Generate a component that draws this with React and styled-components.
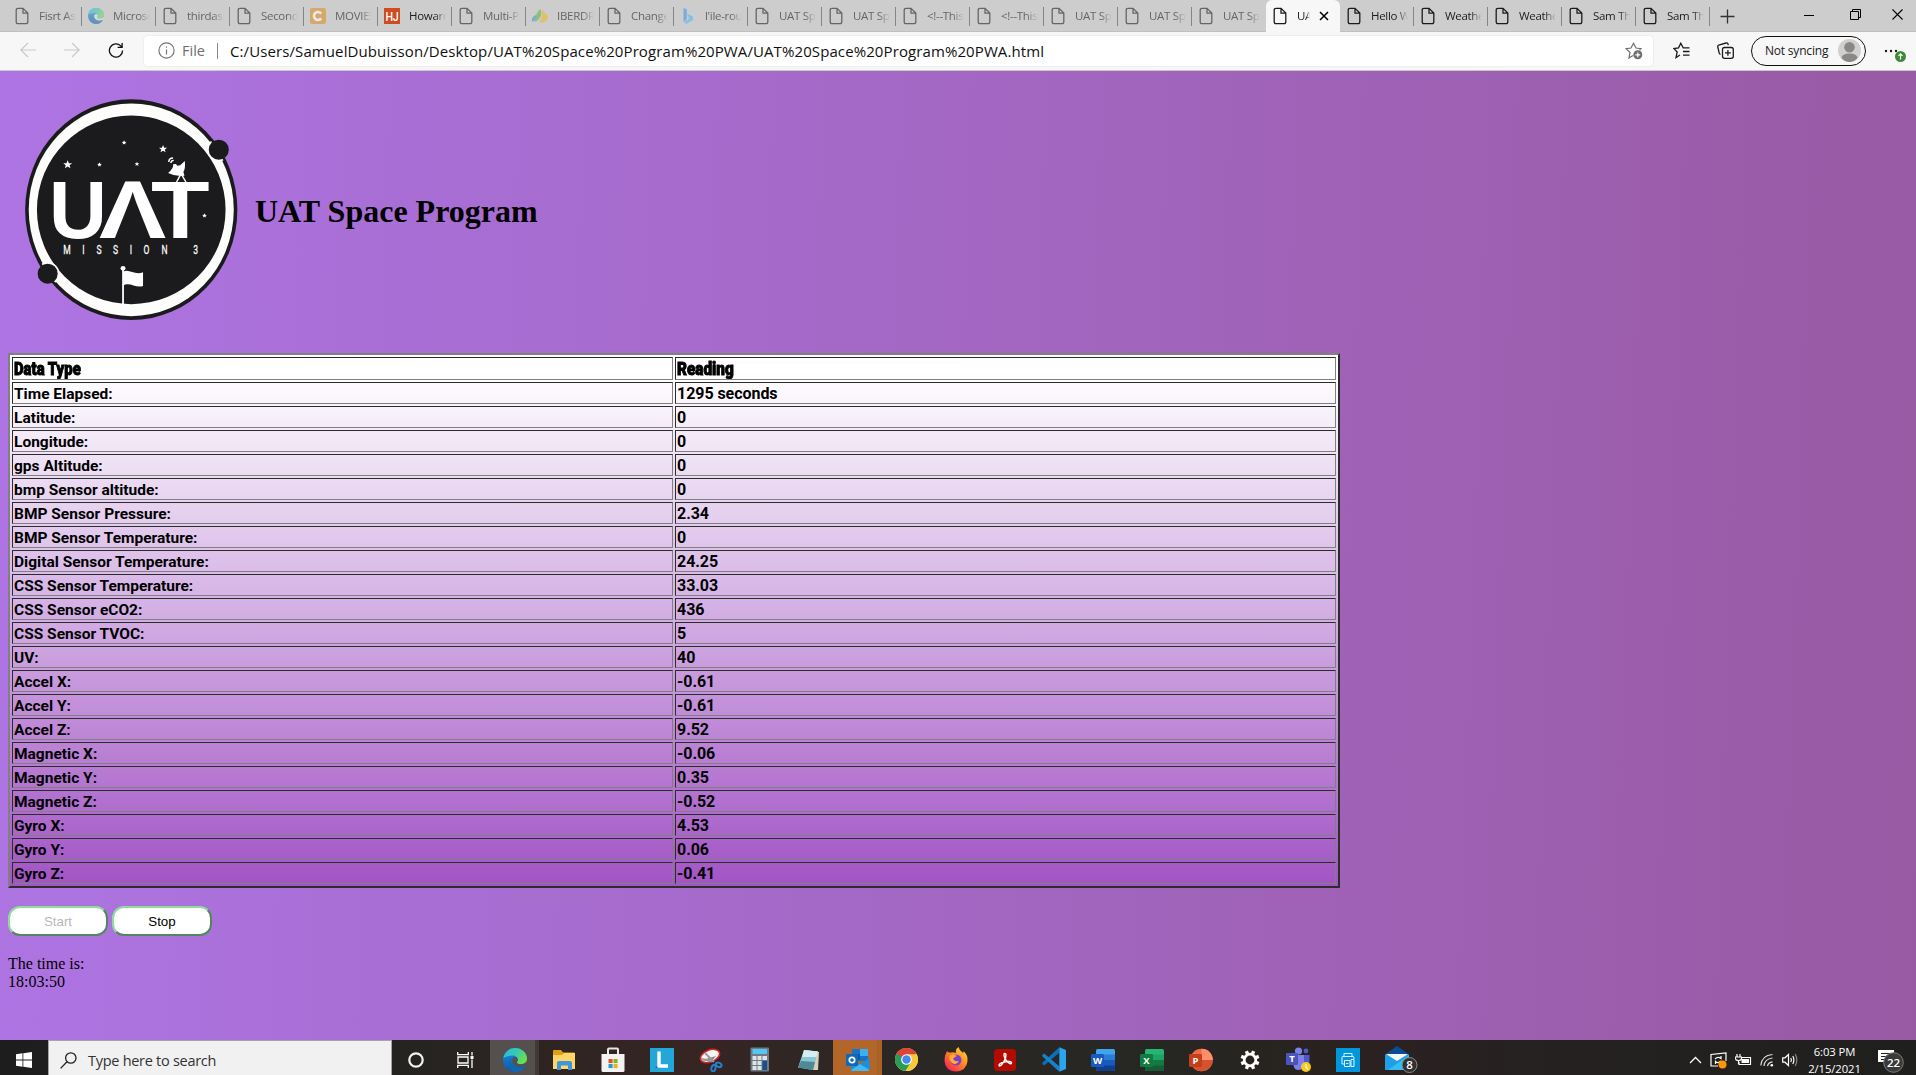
import React from "react";
import styled, { createGlobalStyle, css } from "styled-components";

const ui = `"Segoe UI", "Open Sans", "Noto Sans", sans-serif`;

const Global = createGlobalStyle`
  * { box-sizing: border-box; }
  html, body { margin: 0; padding: 0; overflow: hidden; }
  svg { display: block; flex: none; }
`;

const Screen = styled.div`
  width: 1916px;
  height: 1075px;
  display: flex;
  flex-direction: column;
  overflow: hidden;
  font-family: ${ui};
`;

/* ---------- browser chrome ---------- */
const TabStrip = styled.div`
  height: 32px;
  display: flex;
  padding-left: 8px;
  background: #cdcdcd;
  box-shadow: inset 0 -1px 0 #c0c0c0;
  flex: none;
`;

const TabItem = styled.div`
  width: 74px;
  height: 32px;
  display: flex;
  align-items: center;
  padding-left: 5px;
  font-size: 11.5px;
  letter-spacing: -0.3px;
  color: ${(p) => (p.$dim ? "#666" : "#1c1c1c")};
  background: linear-gradient(#858585, #858585) right 0 top 7px / 1px 19px no-repeat;
  ${(p) =>
    p.$active &&
    css`
      background: #f7f7f7;
      border-radius: 6px 6px 0 0;
    `}
  ${(p) => p.$plain && "background: none;"}
`;

const Favicon = styled.span`
  width: 18px;
  height: 18px;
  display: grid;
  place-items: center;
  opacity: ${(p) => (p.$dim ? 0.55 : 1)};
`;

const TabTitle = styled.span`
  width: ${(p) => (p.$short ? 13 : 37)}px;
  margin-left: 8px;
  line-height: 20px;
  overflow: hidden;
  white-space: nowrap;
  mask-image: linear-gradient(to right, #000 70%, transparent 100%);
`;

const CloseBox = styled.span`
  margin-left: 9px;
`;

const NewTab = styled.div`
  width: 34px;
  display: grid;
  place-items: center;
`;

const WindowControls = styled.div`
  margin-left: auto;
  display: flex;
  height: 29px;
`;

const WindowButton = styled.div`
  width: 46px;
  display: grid;
  place-items: center;
  &:last-child { width: 38px; }
`;

const Toolbar = styled.div`
  height: 39px;
  display: flex;
  align-items: center;
  padding: 0 8px 1px 20px;
  background: #f7f7f7;
  border-bottom: 1px solid #c9c9c9;
  flex: none;
`;

const NavIcons = styled.div`
  width: 124px;
  display: flex;
  gap: 28px;
`;

const AddressBar = styled.div`
  width: 1509px;
  height: 30px;
  flex: none;
  display: flex;
  align-items: center;
  padding: 0 10px 0 14px;
  background: #fff;
  border-radius: 4px;
  box-shadow: 0 0 2px rgba(0, 0, 0, 0.12);
`;

const Scheme = styled.span`
  width: 35px;
  margin-left: 7px;
  font-size: 14.5px;
  color: #6e6e6e;
`;

const Divider = styled.span`
  width: 1px;
  height: 16px;
  background: #8a8a8a;
  margin-right: 12px;
`;

const Url = styled.span`
  font-size: 15px;
  letter-spacing: 0.1px;
  color: #101010;
  flex: 1;
  white-space: nowrap;
`;

const ToolIcon = styled.span`
  margin-left: ${(p) => p.$gap}px;
`;

const Profile = styled.div`
  width: 115px;
  height: 30px;
  margin-left: 17px;
  padding: 0 4px 0 13px;
  display: flex;
  align-items: center;
  justify-content: space-between;
  border: 1.5px solid #111;
  border-radius: 15px;
  font-size: 12px;
  letter-spacing: -0.2px;
  color: #1a1a1a;
  white-space: nowrap;
`;

/* ---------- page ---------- */
const Page = styled.main`
  height: 969px;
  flex: none;
  padding: 0 8px;
  background: linear-gradient(92deg, #ae74e3 0%, #985aa3 100%);
  font-family: "Times New Roman", "Liberation Serif", serif;
  font-size: 16px;
  color: #000;
`;

const Banner = styled.header`
  height: 282px;
  display: flex;
  align-items: flex-start;
  gap: 13px;
  padding-top: 1px;
`;

const Title = styled.h1`
  margin: 121px 0 0;
  font-size: 32px;
  line-height: 36px;
  letter-spacing: 0;
`;

const DataTable = styled.table`
  width: 1332px;
  table-layout: fixed;
  border-collapse: separate;
  border-spacing: 2px;
  border-style: solid;
  border-width: 2px;
  border-color: #808080 #2c2c2c #2c2c2c #808080;
  background: linear-gradient(to bottom, #fff 3%, #a254c5 100%);
`;

const Cell = styled.td`
  height: 22px;
  padding: 2px 1px 0;
  overflow: hidden;
  border: 1px solid;
  border-color: #2c2c2c #808080 #808080 #2c2c2c;
  font: bold ${(p) => (p.$num ? 16 : 15.5)}px/18px "Franklin Gothic Medium", Roboto, sans-serif;
  letter-spacing: ${(p) => (p.$num ? -0.05 : 0)}px;
`;

const HeadCell = styled(Cell).attrs({ as: "th" })`
  height: 23px;
  text-align: left;
  font: 900 17.5px/19px Impact, Roboto, sans-serif;
`;

const HeadText = styled.span`
  display: inline-block;
  transform: scaleX(${(p) => p.$squeeze});
  transform-origin: left;
  -webkit-text-stroke: 0.9px #000;
`;

const Buttons = styled.div`
  display: flex;
  gap: 4px;
  margin-top: 18px;
`;

const ActionButton = styled.button`
  width: 100px;
  height: 30px;
  padding: 0;
  border: 2px solid;
  border-color: #8ddd98 #4f8a5c #4f8a5c #8ddd98;
  border-radius: 12px;
  background: #fff;
  color: #000;
  font: 13.33px Arial, "Liberation Sans", sans-serif;
  &:disabled { color: #b9b9b9; }
`;

const Clock = styled.p`
  margin: 19px 0 0;
  line-height: 18px;
`;

/* ---------- taskbar ---------- */
const Taskbar = styled.footer`
  height: 35px;
  flex: none;
  display: flex;
  background: linear-gradient(90deg, #1d1d1d 0, #262421 22%, #362523 36%, #2c2725 45%, #262723 60%, #28231f 68%, #2b2121 72%, #252221 80%, #1f1f1d 100%);
`;

const StartButton = styled.div`
  width: 48px;
  padding-top: 5px;
  display: grid;
  place-items: center;
`;

const SearchBox = styled.div`
  width: 344px;
  display: flex;
  align-items: center;
  gap: 11px;
  padding: 4px 0 0 11px;
  background: #f1f1f1;
  border: 1px solid #a5a5a5;
  border-bottom: 0;
  color: #333;
  font-size: 14.5px;
  letter-spacing: -0.28px;
`;

const TaskButton = styled.div`
  width: ${(p) => p.$w || 49}px;
  height: 35px;
  padding-top: 4px;
  display: grid;
  place-items: center;
  background: ${(p) => p.$bg || "none"};
`;

const Tray = styled.div`
  margin-left: auto;
  display: flex;
  align-items: center;
  padding: 5px 1px 0 0;
`;

const TrayIcons = styled.div`
  display: flex;
  align-items: center;
  gap: 8px;
`;

const DateTime = styled.div`
  width: 71px;
  text-align: center;
  color: #fff;
  font-size: 11.3px;
  line-height: 17px;
  letter-spacing: -0.1px;
`;

const Notice = styled.div`
  width: 45px;
  padding-left: 8px;
`;

/* ---------- drawings ---------- */
const PageIcon = () => (
  <svg width="14" height="18" viewBox="0 0 14 18" fill="none" stroke="currentColor" strokeWidth="1.3">
    <path d="M1.2 3.2Q1.2 1.3 3 1.3H8L12.8 6.1V14.8Q12.8 16.7 11 16.7H3Q1.2 16.7 1.2 14.8ZM8 1.3V6.1H12.8" />
  </svg>
);

const EdgeIcon = ({ size, hole }) => (
  <svg width={size} height={size} viewBox="0 0 24 24">
    <defs>
      <linearGradient id="eg" x1="0" y1="0" x2="1" y2=".5">
        <stop offset="0" stopColor="#2bb7e8" />
        <stop offset=".55" stopColor="#36c9b4" />
        <stop offset="1" stopColor="#6be04c" />
      </linearGradient>
      <linearGradient id="eb" x1="0" y1="0" x2="0" y2="1">
        <stop offset="0" stopColor="#1a8fe0" />
        <stop offset="1" stopColor="#0c59a4" />
      </linearGradient>
    </defs>
    <circle cx="12" cy="12" r="12" fill="url(#eb)" />
    <path d="M16 18.500Q20 19 24 16.500L23.500 13 20 14Z" fill={hole} />
    <path d="M.3 10.200C1.600 3.900 6.400 0 12 0c7 0 12 5 12 10.600 0 3.600-2.700 5.700-6.200 5.700-2.600 0-3.900-1-3.900-1.900 0-.7.9-1 .9-2.900 0-2.300-2.200-4.100-5.200-4.100-3.800 0-7.300 1.600-9.300 2.800z" fill="url(#eg)" />
    <path d="M8.500 10.500C7 14 9 20.500 17 20.300c2.500-.1 4-.9 5-1.900-2 3.600-6.500 6-11 5.500C5.500 22 4.500 14 8.500 10.500z" fill="#1466b3" />
    <path d="M9.800 10.200c-1.900 3.300.6 8 6.200 8.600 3.500.2 6.700-1.300 7.500-3-1.400 1-8.500 1.400-9.600-1.400-.2-.8.900-1 .9-2.900 0-2.200-3.700-3.400-5-1.300z" fill={hole} />
  </svg>
);

const MovieIcon = () => (
  <svg width="16" height="16" viewBox="0 0 16 16">
    <rect width="16" height="16" rx="2" fill="#df8d1c" />
    <path d="M11.200 5.600A4 4 0 1 0 11.200 10.400" fill="none" stroke="#fff" strokeWidth="2.600" />
  </svg>
);

const HjIcon = () => (
  <svg width="16" height="16" viewBox="0 0 16 16">
    <rect width="16" height="16" fill="#cf4b20" />
    <text x="8" y="12.500" textAnchor="middle" fontFamily="Roboto, sans-serif" fontWeight="500" fontSize="12" fill="#fff" textLength="13" lengthAdjust="spacingAndGlyphs">HJ</text>
  </svg>
);

const IberIcon = () => (
  <svg width="16" height="16" viewBox="0 0 16 16">
    <path d="M0 14C-1 11 1 8 4 7c1 3 0 6-4 7z" fill="#3b8fe0" />
    <path d="M3 14C3 8 5 4 8 1c3 4 1 10-5 13z" fill="#5cb43c" />
    <path d="M7 14c3-3 4-7 3-12 2 0 3 2 3 4 2-1 3 0 3 3 0 4-4 6-9 5z" fill="#f2b51c" />
  </svg>
);

const BingIcon = () => (
  <svg width="16" height="16" viewBox="0 0 16 16">
    <path d="M3.500 0L6.800 1.300V11L3.500 14z" fill="#3a8ff0" />
    <path d="M6.800 5.500L13 8.600V12L6.500 16 3.500 14 9 10.800z" fill="#55b6ee" />
  </svg>
);

const favs = { edge: () => <EdgeIcon size={16} hole="#d8e4ec" />, movie: MovieIcon, hj: HjIcon, iber: IberIcon, bing: BingIcon };

const Logo = () => (
  <svg width="234" height="270" viewBox="22 0 655 810" preserveAspectRatio="none">
    <clipPath id="disc"><ellipse cx="367" cy="413" rx="290" ry="323" /></clipPath>
    <ellipse cx="367" cy="413" rx="297" ry="331" fill="#1b1a1c" />
    <ellipse cx="367" cy="413.500" rx="287" ry="319" fill="#fdfdfc" />
    <ellipse cx="367" cy="413.500" rx="264" ry="283" fill="#1b1a1c" />
    <g clipPath="url(#disc)">
      <ellipse cx="612" cy="233" rx="33" ry="35" fill="#fdfdfc" />
      <ellipse cx="133" cy="605" rx="33" ry="35" fill="#fdfdfc" />
    </g>
    <ellipse cx="612" cy="233" rx="28" ry="30" fill="#1b1a1c" />
    <ellipse cx="133" cy="605" rx="28" ry="30" fill="#1b1a1c" />
    {[[189, 278, 13], [278, 278, 7], [347, 212, 7], [383, 276, 7], [456, 231, 12], [572, 431, 7]].map(([x, y, r]) => (
      <path
        key={x}
        transform={`translate(${x} ${y}) scale(${r})`}
        d="M0-1L.26-.34.95-.31.42.13.59.81 0 .42-.59.81-.42.13-.95-.31-.26-.34Z"
        fill="#fff"
      />
    ))}
    <g fill="#fff" fontFamily="Roboto, Arial, sans-serif">
      <g fontFamily="'Liberation Sans', Arial, sans-serif" fontWeight="700" fontSize="246">
        <text x="137" y="497" textLength="162" lengthAdjust="spacingAndGlyphs">U</text>
        <text x="277" y="497" textLength="188" lengthAdjust="spacingAndGlyphs">Λ</text>
        <text x="422" y="497" textLength="164" lengthAdjust="spacingAndGlyphs">T</text>
      </g>
      <text transform="scale(.6 1)" y="547" fontSize="40" strokeWidth=".8" stroke="#fff" textAnchor="middle" x="312 388 462 538 610 683 767 840 912">MISSION 3</text>
    </g>
    <path d="M470 303Q487 288 484 277L492 276 496 281 504 280 517 267Q519 290 513 300L516 311Q490 314 470 303Z" fill="#fff" />
    <path d="M505 308L494 330M508 308L520 330M472 270Q472 258 484 258M478 273Q478 265 486 265" fill="none" stroke="#fff" strokeWidth="4" />
    <circle cx="344" cy="589" r="7" fill="#fff" />
    <path d="M344 592V698" stroke="#fff" strokeWidth="5" />
    <path d="M344 600C360 588 376 612 400 601V642C380 650 362 628 344 641Z" fill="#fff" />
  </svg>
);

const Office = ({ letter, dark, c }) => (
  <svg width="24" height="24" viewBox="0 0 24 24">
    <rect x="5" y="1" width="19" height="22" rx="1.500" fill={c[0]} />
    <rect x="5" y="6.500" width="19" height="6" fill={c[1]} />
    <rect x="5" y="12" width="19" height="6" fill={c[2]} />
    <path d="M5 17.500H24V21.500Q24 23 22.500 23H6.500Q5 23 5 21.500Z" fill={c[3]} />
    <rect x="0" y="6" width="13" height="13" rx="1.200" fill={dark} />
    <text x="6.500" y="16" textAnchor="middle" fontFamily="Open Sans, sans-serif" fontWeight="700" fontSize="9.500" fill="#fff">{letter}</text>
  </svg>
);

const Explorer = () => (
  <svg width="24" height="24" viewBox="0 0 24 24">
    <path d="M1 3Q1 2 2 2H9L11 4.500H22Q23 4.500 23 6V12H1Z" fill="#e0a011" />
    <path d="M1 7H10L12 5H23V21H1Z" fill="#ffd667" />
    <path d="M5 22V15Q5 13 7 13H18Q20 13 20 15V22H16V17.500H9V22Z" fill="#3c97dc" />
  </svg>
);
const Store = () => (
  <svg width="24" height="26" viewBox="0 0 24 26">
    <path d="M7 8V2.500Q7 1.500 8 1.500H16Q17 1.500 17 2.500V8" fill="none" stroke="#e8e8e8" strokeWidth="2" />
    <path d="M.5 7H23.500V23.500Q23.500 25 22 25H2Q.5 25 .5 23.500Z" fill="#f3f3f3" />
    <path d="M7.500 12H11.600V16.100H7.500Z" fill="#e8501f" /><path d="M12.500 12H16.600V16.100H12.500Z" fill="#7eb61b" />
    <path d="M7.500 17H11.600V21.100H7.500Z" fill="#159fe0" /><path d="M12.500 17H16.600V21.100H12.500Z" fill="#f8ad12" />
  </svg>
);
const LApp = () => (
  <svg width="24" height="24" viewBox="0 0 24 24">
    <rect width="24" height="24" fill="#22a7d8" />
    <path d="M7 4L9 17 5 20H10Z" fill="#12496b" />
    <path d="M9 3.500V18H18" fill="none" stroke="#fff" strokeWidth="3.400" />
  </svg>
);
const Snip = () => (
  <svg width="24" height="24" viewBox="0 0 24 24">
    <ellipse cx="11" cy="8" rx="10" ry="6" transform="rotate(-22 11 8)" fill="#f4f4f4" stroke="#d8232a" strokeWidth="1.600" />
    <path d="M3 12L17 8 12 14Z" fill="#888" /><path d="M6 5L15 14M2 11L14 13" stroke="#999" strokeWidth="1.800" />
    <g fill="none" stroke="#2580cf" strokeWidth="2"><ellipse cx="14.500" cy="20" rx="2" ry="3.200" transform="rotate(15 14 20)" /><ellipse cx="19.500" cy="16.500" rx="3" ry="2" transform="rotate(25 19 17)" /></g>
  </svg>
);
const Calc = () => (
  <svg width="20" height="25" viewBox="0 0 20 25">
    <rect x=".5" y=".5" width="18.500" height="24" rx="1" fill="#6f7a86" />
    <rect x="2.500" y="2" width="14.500" height="5" fill="#4fc9f2" />
    {[0, 1, 2].map((r) => [0, 1].map((k) => <rect key={r + "" + k} x={2.500 + k * 5} y={9 + r * 5} width="4" height="4" fill="#dfe3e7" />))}
    <rect x="12.500" y="9" width="4.500" height="4" fill="#dfe3e7" /><rect x="12.500" y="14" width="4.500" height="9" fill="#174e8f" />
  </svg>
);
const Notepad = () => (
  <svg width="24" height="24" viewBox="0 0 24 24">
    <path d="M8 2L22 4 21 22 16 22Z" fill="#d8cfb4" /><path d="M7 2L21 3.500 16 22 1 19.500Z" fill="#8cc6d4" />
    <path d="M7 2L21 3.500 19.500 9 5 9Z" fill="#d3eef3" /><path d="M4 13L18 14 16 22 1 19.500Z" fill="#4c8a98" />
  </svg>
);
const Outlook = () => (
  <svg width="24" height="24" viewBox="0 0 24 24">
    <path d="M6 2Q6 1 7 1H21Q22 1 22 2V13H6Z" fill="#1873c6" /><path d="M14 1H22V8H14Z" fill="#3bb0ef" /><path d="M6 6H14V12H6Z" fill="#0b5aa8" />
    <path d="M5 11L14 16 23.500 10V21.500Q23.500 23 22 23H6.500Q5 23 5 21.500Z" fill="#1a90de" /><path d="M5 22L14 16 23.500 22 22 23H6Z" fill="#46b7f0" />
    <rect y="6" width="12" height="12" rx="1" fill="#1068b8" />
    <circle cx="6" cy="12" r="2.700" fill="none" stroke="#fff" strokeWidth="1.700" />
  </svg>
);
const Chrome = () => (
  <svg width="23" height="23" viewBox="0 0 24 24">
    <circle cx="12" cy="12" r="12" fill="#f7ca3b" />
    <path d="M12 12L22.400 6A12 12 0 0 0 1.600 6L7 15Z" fill="#dc4437" />
    <path d="M12 12L1.600 6A12 12 0 0 0 11 24L16.500 15Z" fill="#2a9c57" />
    <path d="M12 6.500H22.600A12 12 0 0 1 11 24L17 14.500Z" fill="#f7ca3b" />
    <circle cx="12" cy="12" r="5.600" fill="#fff" /><circle cx="12" cy="12" r="4.400" fill="#4688f1" />
  </svg>
);
const Firefox = () => (
  <svg width="24" height="25" viewBox="0 0 24 25">
    <defs><linearGradient id="ff" x1="1" y1="0" x2=".2" y2="1"><stop offset="0" stopColor="#ffe83d" /><stop offset=".5" stopColor="#ff8a1f" /><stop offset="1" stopColor="#f4205a" /></linearGradient></defs>
    <path d="M3 4Q4 6 7 5.500 10 5 12 6 11 2 14.500 0 15 3 19 6 20 5 19.500 4 24 8 23.500 14 22.500 24 12 24.500 1 24 .5 14 .5 8 3 4Z" fill="url(#ff)" />
    <circle cx="12" cy="13" r="5.500" fill="#7a3fd0" /><path d="M5 9Q9 6 13 9 10 10 9 12 11 15 15 14 12 19 8 16 5 13 5 9Z" fill="#ffad2b" />
  </svg>
);
const Acrobat = () => (
  <svg width="22" height="22" viewBox="0 0 22 22">
    <rect width="22" height="22" rx="3.500" fill="#b30b00" />
    <path d="M10.500 4.500C12.500 4 12 7 11.500 9 10 13 7 17.500 5.500 17 4 16 6 14 10 13 14 12 18 12.500 17.500 14 17 16 13.500 13.500 11.500 10.500 10 8 9.500 5 10.500 4.500Z" fill="none" stroke="#fff" strokeWidth="1.400" />
  </svg>
);
const VsCode = () => (
  <svg width="24" height="25" viewBox="0 0 24 25">
    <path d="M17.500 5.500L2.200 18.500.3 17V15.800L17.300.3Z" fill="#0a70b8" />
    <path d="M17.500 19.500L2.200 6.500.3 8V9.200L17.300 24.700Z" fill="#1583cb" />
    <path d="M17.300 .3L24 3V22L17.300 24.700Z" fill="#2aa4ef" />
  </svg>
);
const Gear = () => (
  <svg width="20" height="20" viewBox="0 0 20 20">
    <circle cx="10" cy="10" r="5.800" fill="none" stroke="#fff" strokeWidth="2.800" />
    {[0, 45, 90, 135, 180, 225, 270, 315].map((a) => <rect key={a} x="8.300" y=".5" width="3.400" height="3.500" fill="#fff" transform={`rotate(${a + 22.500} 10 10)`} />)}
  </svg>
);
const Teams = () => (
  <svg width="26" height="25" viewBox="0 0 26 25">
    <circle cx="12.500" cy="4" r="3.600" fill="#7b83eb" /><circle cx="20" cy="4" r="2.400" fill="#5059c9" />
    <path d="M15 8H23.500V15Q23.500 19 19 19H15Z" fill="#5059c9" /><path d="M8 8H18V16Q18 23 12.500 23 8 23 7.500 18Z" fill="#7b83eb" />
    <rect y="6" width="12" height="12" rx="1" fill="#4b53bc" />
    <text x="6" y="15.300" textAnchor="middle" fontFamily="Open Sans, sans-serif" fontWeight="700" fontSize="9.500" fill="#fff">T</text>
    <circle cx="20" cy="20" r="5" fill="#fdc91c" /><path d="M20 17V20.500L22 22" stroke="#fff" strokeWidth="1.300" fill="none" />
  </svg>
);
const Printer = () => (
  <svg width="24" height="24" viewBox="0 0 24 24">
    <rect width="24" height="24" fill="#0096dc" />
    <g fill="none" stroke="#fff" strokeWidth=".9"><path d="M8 8V5.500H16V8M8.500 16H6V9.500Q6 8.500 7 8.500H17Q18 8.500 18 9.500V11M8.500 12.500H14V18.500H8.500ZM15 11.500H18V18.500H15ZM10 15.500H12.500" /></g>
  </svg>
);
const Mail = () => (
  <svg width="34" height="27" viewBox="0 0 34 27">
    <path d="M0 8.500L12 0 24 8.500V12H0Z" fill="#0a4d96" /><path d="M0 8.500H24V24H0Z" fill="#1e9fe6" />
    <path d="M1 8H23L12 15Z" fill="#f5f5f5" /><path d="M24 9L3 24H24Z" fill="#35bdf2" />
    <circle cx="24.500" cy="19" r="7.500" fill="#2f3133" stroke="#8a8a8a" />
    <text x="24.500" y="23.200" textAnchor="middle" fontFamily="Open Sans, sans-serif" fontWeight="600" fontSize="11.500" fill="#fff">8</text>
  </svg>
);

const tabs = [
  ["Fisrt Ass"], ["Microso", "edge"], ["thirdass"], ["Second"], ["MOVIES", "movie"], ["Howard", "hj"],
  ["Multi-Pa"], ["IBERDRO", "iber"], ["Change"], ["l'ile-rous", "bing"], ["UAT Spa"], ["UAT Spa"],
  ["<!--This"], ["<!--This"], ["UAT Spa"], ["UAT Spa"], ["UAT Spa"], ["UAT"], ["Hello W"],
  ["Weather"], ["Weather"], ["Sam Tho"], ["Sam Tho"],
];

const readings = [
  ["Time Elapsed:", "1295 seconds"], ["Latitude:", "0"], ["Longitude:", "0"], ["gps Altitude:", "0"],
  ["bmp Sensor altitude:", "0"], ["BMP Sensor Pressure:", "2.34"], ["BMP Sensor Temperature:", "0"],
  ["Digital Sensor Temperature:", "24.25"], ["CSS Sensor Temperature:", "33.03"], ["CSS Sensor eCO2:", "436"],
  ["CSS Sensor TVOC:", "5"], ["UV:", "40"], ["Accel X:", "-0.61"], ["Accel Y:", "-0.61"], ["Accel Z:", "9.52"],
  ["Magnetic X:", "-0.06"], ["Magnetic Y:", "0.35"], ["Magnetic Z:", "-0.52"], ["Gyro X:", "4.53"],
  ["Gyro Y:", "0.06"], ["Gyro Z:", "-0.41"],
];

const apps = [
  Explorer, Store, LApp, Snip, Calc, Notepad, Outlook, Chrome, Firefox, Acrobat, VsCode,
  () => <Office letter="W" dark="#185abd" c={["#41a5ee", "#2b7cd3", "#185abd", "#103f91"]} />,
  () => <Office letter="X" dark="#107c41" c={["#28b573", "#21a366", "#107c41", "#185c37"]} />,
  () => (
    <svg width="24" height="24" viewBox="0 0 24 24">
      <circle cx="12.500" cy="12" r="11.300" fill="#ed6c47" /><path d="M12.500 .7A11.300 11.300 0 0 1 23.800 12H12.500Z" fill="#ff8f6b" />
      <path d="M1.200 12A11.300 11.300 0 0 0 23.800 12Z" fill="#d35230" /><rect y="6" width="13" height="13" rx="1.200" fill="#c43e1c" />
      <text x="6.500" y="16" textAnchor="middle" fontFamily="Open Sans, sans-serif" fontWeight="700" fontSize="9.500" fill="#fff">P</text>
    </svg>
  ),
  Gear, Teams, Printer,
];

export default function App() {
  return (
    <Screen>
      <Global />
      <TabStrip>
        {tabs.map(([title, fav], i) => {
          const Fav = favs[fav] || PageIcon;
          const active = i === 17;
          const dim = i < 17 && i !== 5;
          return (
            <TabItem key={i} $active={active} $dim={dim} $plain={i === 16}>
              <Favicon $dim={dim && !!fav}><Fav /></Favicon>
              <TabTitle $short={active}>{title}</TabTitle>
              {active && (
                <CloseBox>
                  <svg width="10" height="10" viewBox="0 0 10 10" stroke="#000" strokeWidth="1.600"><path d="M1 1L9 9M9 1L1 9" /></svg>
                </CloseBox>
              )}
            </TabItem>
          );
        })}
        <NewTab>
          <svg width="15" height="15" viewBox="0 0 15 15" stroke="#333" strokeWidth="1.300"><path d="M7.500 .5V14.500M.5 7.500H14.500" /></svg>
        </NewTab>
        <WindowControls>
          <WindowButton><svg width="10" height="10" stroke="#000"><path d="M0 5.500H10" /></svg></WindowButton>
          <WindowButton><svg width="11" height="11" fill="none" stroke="#000"><path d="M.5 2.500H8.500V10.500H.5ZM2.500 2.500V.5H10.500V8.500H8.500" /></svg></WindowButton>
          <WindowButton><svg width="11" height="11" stroke="#000" strokeWidth="1.100"><path d="M.5 .5L10.500 10.500M10.500 .5L.5 10.500" /></svg></WindowButton>
        </WindowControls>
      </TabStrip>

      <Toolbar>
        <NavIcons>
          <svg width="16" height="16" fill="none" stroke="#c9c9c9" strokeWidth="1.200"><path d="M16 8H.8M8 1L.8 8 8 15" /></svg>
          <svg width="16" height="16" fill="none" stroke="#c9c9c9" strokeWidth="1.200"><path d="M0 8H15.200M8 1L15.200 8 8 15" /></svg>
          <svg width="16" height="17" viewBox="0 0 17 17" fill="none" stroke="#111" strokeWidth="1.400"><path d="M15.500 8.500A7 7 0 1 1 13.500 3.600L14.800 5M15 .6V5.200H10.200" /></svg>
        </NavIcons>
        <AddressBar>
          <svg width="17" height="17" viewBox="0 0 17 17" fill="none" stroke="#757575" strokeWidth="1.200"><circle cx="8.500" cy="8.500" r="7.600" /><path d="M8.500 7.500V12.500M8.500 4.500V5.800" /></svg>
          <Scheme>File</Scheme>
          <Divider />
          <Url>C:/Users/SamuelDubuisson/Desktop/UAT%20Space%20Program%20PWA/UAT%20Space%20Program%20PWA.html</Url>
          <svg width="18" height="18" viewBox="0 0 18 18" fill="none" stroke="#6e6e6e" strokeWidth="1.200">
            <path d="M8 13.500L4 16 5 10.500 1 6.700 6 6 8.500 1.300 11 6 16 6.700 14.500 8.200" /><circle cx="12.800" cy="12.800" r="4.500" fill="#6e6e6e" stroke="none" /><path d="M12.800 10.400V15.200M10.400 12.800H15.200" stroke="#fff" />
          </svg>
        </AddressBar>
        <ToolIcon $gap={20}>
          <svg width="17" height="17" viewBox="0 0 17 17" fill="none" stroke="#1a1a1a" strokeWidth="1.300"><path d="M7 13L3 15.600 4.200 10 .8 6.500 5.500 5.900 7.800 1.300 10.200 5.900H16.500M10 9.500H16.500M10 13.200H16.500" /></svg>
        </ToolIcon>
        <ToolIcon $gap={27}>
          <svg width="17" height="17" viewBox="0 0 17 17" fill="none" stroke="#1a1a1a" strokeWidth="1.300"><path d="M3.500 12.500Q2.500 12 2.200 11L.8 5Q.5 3.600 1.800 3L9 1Q10.500 .7 11 2L11.300 3.200" /><rect x="5.500" y="5.500" width="10.800" height="10.800" rx="2" /><path d="M10.900 8V13.800M8 10.900H13.800" /></svg>
        </ToolIcon>
        <Profile>
          Not syncing
          <svg width="23" height="23" viewBox="0 0 23 23"><circle cx="11.500" cy="11.500" r="11.500" fill="#d2d0ce" /><circle cx="11.500" cy="8.300" r="5.300" fill="#8a8886" /><path d="M3.500 19Q4 14.500 11.500 14.500T19.500 19Q16 23 11.500 23T3.500 19Z" fill="#8a8886" /></svg>
        </Profile>
        <ToolIcon $gap={18}>
          <svg width="24" height="22" viewBox="0 0 24 22"><g fill="#1a1a1a"><circle cx="2" cy="11" r="1.200" /><circle cx="7" cy="11" r="1.200" /><circle cx="12" cy="11" r="1.200" /></g><circle cx="16.500" cy="16.500" r="5.500" fill="#3f8a3a" /><path d="M16.500 19.500V14M14.500 15.800L16.500 13.800 18.500 15.800" fill="none" stroke="#fff" strokeWidth="1.200" /></svg>
        </ToolIcon>
      </Toolbar>

      <Page>
        <Banner>
          <Logo />
          <Title>UAT Space Program</Title>
        </Banner>
        <DataTable>
          <thead>
            <tr>
              <HeadCell><HeadText $squeeze={0.85}>Data Type</HeadText></HeadCell>
              <HeadCell><HeadText $squeeze={0.875}>Reading</HeadText></HeadCell>
            </tr>
          </thead>
          <tbody>
            {readings.map(([name, value]) => (
              <tr key={name}>
                <Cell>{name}</Cell>
                <Cell $num>{value}</Cell>
              </tr>
            ))}
          </tbody>
        </DataTable>
        <Buttons>
          <ActionButton disabled>Start</ActionButton>
          <ActionButton>Stop</ActionButton>
        </Buttons>
        <Clock>The time is:<br />18:03:50</Clock>
      </Page>

      <Taskbar>
        <StartButton>
          <svg width="16" height="16" viewBox="0 0 16 16" fill="#fff"><path d="M0 2.200L6.500 1.300V7.600H0ZM7.300 1.200L16 0V7.600H7.300ZM0 8.400H6.500V14.700L0 13.800ZM7.300 8.400H16V16L7.300 14.800Z" /></svg>
        </StartButton>
        <SearchBox>
          <svg width="17" height="17" viewBox="0 0 17 17" fill="none" stroke="#222" strokeWidth="1.300"><circle cx="10.800" cy="6" r="5.200" /><path d="M7 9.800L.6 16.400" /></svg>
          Type here to search
        </SearchBox>
        <TaskButton $w={48}><svg width="16" height="16"><circle cx="8" cy="8" r="6.700" fill="none" stroke="#f2f2f2" strokeWidth="2.200" /></svg></TaskButton>
        <TaskButton $w={50}>
          <svg width="17" height="16" viewBox="0 0 17 16" fill="none" stroke="#fff" strokeWidth="1.300"><path d="M.7 0V2.700H11.300V0M.7 16V13.300H11.300V16M1 5H11V11H1ZM15 0V3.500M15 7.500V16" /><rect x="13.500" y="4" width="3" height="3" fill="#fff" stroke="none" /></svg>
        </TaskButton>
        <TaskButton $bg="linear-gradient(90deg, #55504e 45px, #3f3a38 45px)"><EdgeIcon size={24} hole="#55504e" /></TaskButton>
        {apps.map((Icon, i) => (
          <TaskButton key={i} $bg={i === 6 ? "linear-gradient(90deg, #b2662a 44px, #9e5923 44px, #a96228 45px)" : undefined}><Icon /></TaskButton>
        ))}
        <TaskButton $w={59}><Mail /></TaskButton>
        <Tray>
          <TrayIcons>
            <svg width="13" height="8" fill="none" stroke="#fff" strokeWidth="1.300"><path d="M1 7L6.500 1.500 12 7" /></svg>
            <svg width="17" height="17" viewBox="0 0 17 17" fill="none" stroke="#fff" strokeWidth="1.200"><path d="M16 9V1L1 2.500V14H8M5 7Q8 4 11 6.500V4M11 9Q8 12 5.500 9.500V12" /><circle cx="12.500" cy="12.500" r="4" fill="#ff9800" stroke="none" /></svg>
            <svg width="17" height="13" viewBox="0 0 17 13" fill="none" stroke="#fff" strokeWidth="1.200"><path d="M6 3.500H15.500V10.500H4V8M2 0V3M5 0V3M.5 3H6.500V5Q6 6.500 3.500 6.500 1 6.500 .5 5ZM3.500 6.500V10" /><rect x="6.500" y="5" width="7.500" height="4" fill="#fff" stroke="none" /></svg>
            <svg width="14" height="14" viewBox="0 0 14 14" fill="none" stroke="#ddd" strokeWidth="1.200"><path d="M.8 12.500Q1.500 2.500 12.500 1.500M4 13Q4.500 6 12.500 5M7.500 13.200Q8 9.500 12.500 8.800" /><circle cx="11.800" cy="12.300" r="1.300" fill="#fff" stroke="none" /></svg>
            <svg width="17" height="14" viewBox="0 0 17 14" fill="none" stroke="#fff" strokeWidth="1.200"><path d="M.7 4.800H3L6.500 1.500V12.500L3 9.200H.7ZM8.800 5Q10 7 8.800 9M10.800 3Q13 7 10.800 11" /><path d="M13.200 1Q16.500 7 13.200 13" stroke="#888" /></svg>
          </TrayIcons>
          <DateTime>6:03 PM<br />2/15/2021</DateTime>
          <Notice>
            <svg width="27" height="25" viewBox="0 0 27 25"><path d="M0 2H16V14H9L6 18V14H0Z" fill="#fff" /><path d="M3 5.500H13M3 8.500H13M3 11.500H8" stroke="#222" strokeWidth="1.100" /><circle cx="15.500" cy="14.500" r="9.800" fill="#3a3a3a" stroke="#7d7d7d" /><text x="15.500" y="18.800" textAnchor="middle" fontFamily="Open Sans, sans-serif" fontWeight="600" fontSize="11.500" fill="#fff">22</text></svg>
          </Notice>
        </Tray>
      </Taskbar>
    </Screen>
  );
}
